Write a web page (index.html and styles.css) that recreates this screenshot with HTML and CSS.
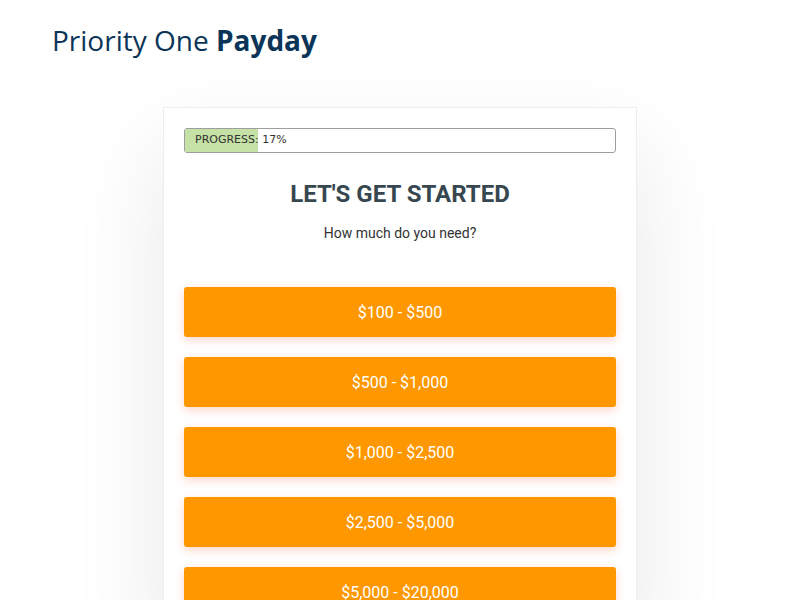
FILE: index.html
```html
<!DOCTYPE html>
<html lang="en">
<head>
    <meta charset="UTF-8">
    <meta name="viewport" content="width=device-width, initial-scale=1.0">
    <title>Priority One Payday</title>
    <link rel="stylesheet" href="styles.css">
</head>
<body>
    <header class="site-header">
        <div class="logo">Priority One <strong>Payday</strong></div>
    </header>

    <main class="form-card">
        <div class="progress">
            <div class="progress-fill" style="width: 17%;"></div>
            <span class="progress-label">PROGRESS: 17%</span>
        </div>

        <h1 class="step-title">LET'S GET STARTED</h1>
        <p class="step-question">How much do you need?</p>

        <div class="options">
            <button class="option">$100 - $500</button>
            <button class="option">$500 - $1,000</button>
            <button class="option">$1,000 - $2,500</button>
            <button class="option">$2,500 - $5,000</button>
            <button class="option">$5,000 - $20,000</button>
        </div>
    </main>
</body>
</html>
```

FILE: styles.css
```css
body {
    margin: 0;
    background: #fff;
    font-family: Roboto, 'Liberation Sans', Arial, sans-serif;
    color: #333;
}

.site-header {
    padding: 20px 52px 0;
    height: 87px;
    box-sizing: border-box;
}

.logo {
    font-family: 'Open Sans', 'DejaVu Sans', sans-serif;
    font-size: 28px;
    line-height: 40px;
    color: #0b3558;
}

.logo strong {
    font-weight: 700;
}

.form-card {
    width: 432px;
    margin: 20px auto 0;
    padding: 20px;
    background: #fff;
    border: 1px solid #eee;
    box-shadow: 0 40px 90px rgba(0, 0, 0, 0.09);
}

.progress {
    position: relative;
    height: 23px;
    border: 1px solid #9e9e9e;
    border-radius: 3px;
    overflow: hidden;
}

.progress-fill {
    height: 100%;
    background: #c5e1a5;
}

.progress-label {
    position: absolute;
    left: 10px;
    top: -1px;
    line-height: 23px;
    font-family: 'DejaVu Sans', Verdana, sans-serif;
    font-size: 11px;
    color: #333;
}

.step-title {
    margin: 26px 0 0;
    text-align: center;
    font-size: 24px;
    font-weight: 700;
    line-height: 30px;
    color: #37474f;
}

.step-question {
    margin: 14px 0 0;
    text-align: center;
    font-size: 14px;
    line-height: 20px;
    color: #333;
}

.options {
    display: flex;
    flex-direction: column;
    gap: 20px;
    margin-top: 44px;
}

.option {
    height: 50px;
    border: none;
    border-radius: 3px;
    background: #ff9800;
    color: #fff;
    font-family: Roboto, 'Liberation Sans', Arial, sans-serif;
    font-size: 16px;
    font-weight: 400;
    box-shadow: 0 3px 10px rgba(255, 87, 34, 0.25);
    cursor: pointer;
}
```
